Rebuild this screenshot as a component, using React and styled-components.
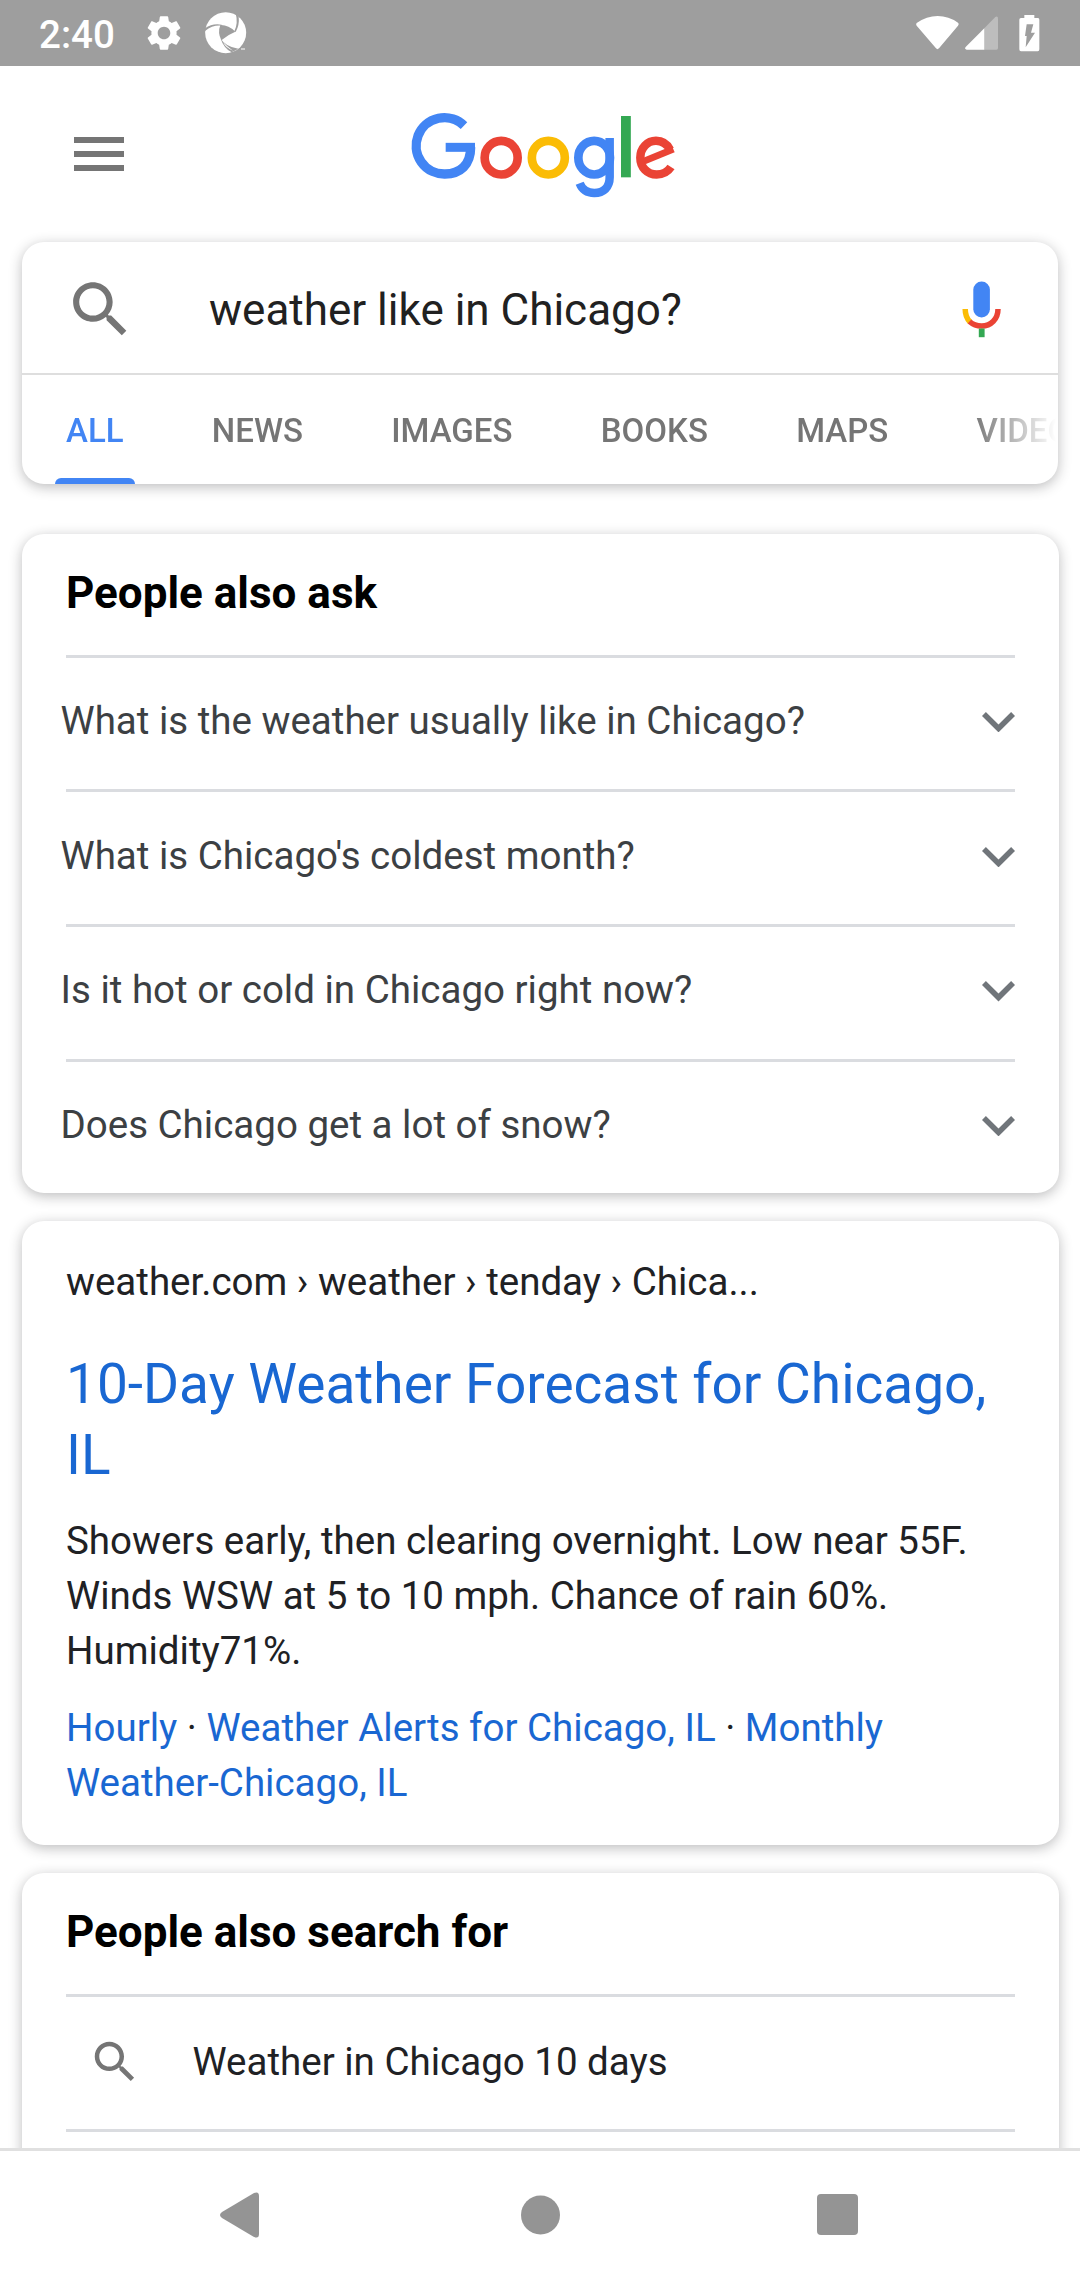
import React from 'react';
import styled, { createGlobalStyle } from 'styled-components';

const Global = createGlobalStyle`
  * { box-sizing: border-box; }
  body { margin: 0; background: #fff; font-family: Roboto, "Liberation Sans", sans-serif; }
  svg { display: block; flex: none; }
`;

const Screen = styled.div`
  width: 1080px;
  height: 2280px;
  display: flex;
  flex-direction: column;
  overflow: hidden;
  background: #fff;
`;

const StatusBar = styled.div`
  height: 66px;
  flex: none;
  background: #9e9e9e;
  display: flex;
  align-items: center;
  justify-content: space-between;
  padding: 0 40px 0 39px;
`;

const StatusGroup = styled.div`
  display: flex;
  align-items: center;
  gap: ${(p) => p.$gap}px;
`;

const Clock = styled.span`
  color: #fff;
  font-size: 38.5px;
  font-weight: 500;
  line-height: 62px;
  width: 84px;
  padding-top: 4px;
`;

const BatterySlot = styled.span`
  padding-left: 15px;
`;

const Content = styled.main`
  flex: 1;
  min-height: 0;
  overflow: hidden;
`;

const Header = styled.header`
  height: 176px;
  display: grid;
  grid-template-columns: 380px 320px 380px;
  padding-top: 24px;
`;

const MenuButton = styled.button`
  border: 0;
  background: none;
  display: flex;
  flex-direction: column;
  gap: 8px;
  padding: 47px 0 0 74px;
`;

const MenuBar = styled.span`
  width: 50px;
  height: 6px;
  background: #757575;
`;

const Card = styled.section`
  margin: 0 21px ${(p) => p.$after}px 22px;
  height: ${(p) => p.$height}px;
  border-radius: 22px;
  background: #fff;
  box-shadow: 0 3px 13px rgba(32, 33, 36, 0.3);
  padding: 0 44px;
`;

const SearchCard = styled(Card)`
  padding: 0;
  margin-right: 22px;
  overflow: hidden;
`;

const SearchRow = styled.div`
  height: 133px;
  border-bottom: 2px solid #dedede;
  display: flex;
  align-items: center;
  padding: 3px 57.5px 0 41.5px;
`;

const Query = styled.span`
  flex: 1;
  padding: 1px 0 0 72.5px;
  font-size: 44px;
  line-height: 56px;
  color: #212121;
`;

const Tabs = styled.nav`
  display: flex;
  height: 109px;
  padding-left: 33px;
  gap: 66.3px;
  mask-image: linear-gradient(to right, #000 950px, transparent 1034px);
`;

const Tab = styled.a`
  flex: none;
  display: flex;
  flex-direction: column;
  justify-content: space-between;
  align-items: center;
  padding: 37px 11px 0;
  font-size: 33px;
  font-weight: 500;
  line-height: 38px;
  color: ${(p) => (p.$active ? '#4285f4' : '#757575')};
`;

const Indicator = styled.span`
  width: 80px;
  margin: 0 -12px;
  height: 6px;
  border-radius: 6px 6px 0 0;
  background: #4285f4;
`;

const Heading = styled.h2`
  margin: 0;
  height: 121px;
  padding-top: 32px;
  font-size: 44px;
  font-weight: 700;
  line-height: 54px;
  color: #000;
`;

const Question = styled.div`
  height: 134.8px;
  border-top: 3px solid #dadce0;
  padding-bottom: 3px;
  display: flex;
  align-items: center;
  justify-content: space-between;
`;

const QuestionText = styled.span`
  margin: 0 0 2px -5.5px;
  font-size: 38.5px;
  line-height: 52px;
  color: #3c4043;
`;

const Suggestion = styled(Question)`
  justify-content: flex-start;
  padding: 0 0 2px 22px;
  gap: 50.5px;
`;

const SuggestionText = styled(QuestionText)`
  margin: 0;
  color: #202124;
`;

const Url = styled.div`
  padding-top: 35px;
  font-size: 38.5px;
  line-height: 52px;
  color: #202124;
`;

const Title = styled.h3`
  margin: 41px 0 0;
  font-size: 55px;
  font-weight: 400;
  line-height: 71px;
  color: #1967d2;
`;

const Snippet = styled.p`
  margin: 22px 0 0;
  font-size: 38.5px;
  line-height: 55px;
  color: #202124;
`;

const Link = styled.a`
  color: #1967d2;
`;

const NavBar = styled.footer`
  height: 132px;
  flex: none;
  border-top: 3px solid #e0e0e0;
  background: #fff;
  display: flex;
  align-items: center;
  justify-content: space-between;
  padding: 0 222px 2px 219px;
`;

function Gear() {
  return (
    <svg width="42" height="42" viewBox="0 0 24 24" fill="#fff">
      <path d="M19.14 12.94c.04-.3.06-.61.06-.94 0-.32-.02-.64-.07-.94l2.03-1.58c.18-.14.23-.41.12-.61l-1.92-3.32c-.12-.22-.37-.29-.59-.22l-2.39.96c-.5-.38-1.03-.7-1.62-.94l-.36-2.54c-.04-.24-.24-.41-.48-.41h-3.84c-.24 0-.43.17-.47.41l-.36 2.54c-.59.24-1.13.57-1.62.94l-2.39-.96c-.22-.08-.47 0-.59.22L2.74 8.87c-.12.21-.08.47.12.61l2.03 1.58c-.05.3-.09.63-.09.94s.02.64.07.94l-2.03 1.58c-.18.14-.23.41-.12.61l1.92 3.32c.12.22.37.29.59.22l2.39-.96c.5.38 1.03.7 1.62.94l.36 2.54c.05.24.24.41.48.41h3.84c.24 0 .44-.17.47-.41l.36-2.54c.59-.24 1.13-.56 1.62-.94l2.39.96c.22.08.47 0 .59-.22l1.92-3.32c.12-.22.07-.47-.12-.61l-2.01-1.58zM12 15.6c-1.98 0-3.6-1.62-3.6-3.6s1.62-3.6 3.6-3.6 3.6 1.62 3.6 3.6-1.62 3.6-3.6 3.6z" />
    </svg>
  );
}

function Aperture() {
  return (
    <svg width="42" height="42" viewBox="0 0 126 126">
      <circle cx="62" cy="62" r="61.5" fill="#fff" />
      <g fill="#9e9e9e">
        <path d="M46 39 Q70 38 91 59 Q70 67 49 85 Q37 62 46 39Z" />
        <path d="M0 49 Q22 33 50 38 V41 Q24 38 0 57Z" />
        <path d="M92 4 L101 14 Q104 38 92 60 L88 58 Q100 34 92 4Z" />
        <path d="M47 80 Q62 104 100 110 L92 115 L80 121 Q56 108 47 80Z" />
      </g>
      <path d="M54 90 Q62 108 84 116 Q66 104 54 90Z" fill="#fff" />
      <path d="M108 111 H120" stroke="#fff" strokeWidth="3" />
    </svg>
  );
}

function Wifi() {
  return (
    <svg width="43" height="34" viewBox="0 0 129 102" fill="#fff">
      <path d="M2 21 Q32 0 65 0 Q98 0 126 20 Q130 24 126 29 L69 97 Q64 102 60 97 L2 29 Q-1 25 2 21Z" />
    </svg>
  );
}

function Signal() {
  return (
    <svg width="33" height="34" viewBox="0 0 99 102">
      <path d="M58 37 L91 3 Q99 -1 99 8 V96 Q99 101 94 101 H58Z" fill="#bdbdbd" />
      <path d="M58 37 V101 H5 Q-3 99 2 93Z" fill="#fff" />
    </svg>
  );
}

function Battery() {
  return (
    <svg width="21" height="37" viewBox="0 0 63 111">
      <path d="M16 0 H46 V9 H57 Q61 9 61 14 V103 Q61 109 56 109 H6 Q1 109 1 103 V14 Q1 9 6 9 H16Z" fill="#fff" />
      <path d="M23 28 H43 L36 53 H48 L20 97 L23 63 H18Z" fill="#9e9e9e" />
    </svg>
  );
}

function Logo() {
  return (
    <svg width="320" height="130" viewBox="0 0 960 390" role="img" aria-label="Google">
      <g fill="none" stroke="#4285f4" strokeWidth="28">
        <path d="M252 107 A84.5 84.5 0 1 0 195 252 C241 252 272 224 272 172" />
        <path d="M197 172 H285" strokeWidth="27" />
        <path d="M689 144 V262 C689 292 670 309 643 309 C622 309 606 298 599 280" strokeWidth="25.5" />
        <ellipse cx="642.5" cy="203" rx="47.5" ry="50.5" strokeWidth="26" />
      </g>
      <ellipse cx="363.5" cy="203" rx="49.5" ry="50.5" fill="none" stroke="#ea4335" strokeWidth="26" />
      <ellipse cx="505" cy="203" rx="49.5" ry="50.5" fill="none" stroke="#fbbc05" strokeWidth="26" />
      <rect x="723" y="78" width="29.5" height="184" fill="#34a853" />
      <path d="M870 179 C861 162 848 152.5 828 152.5 C802 152.5 781 174 781 203 C781 232 802 253.5 830 253.5 C849 253.5 863 246 873 231" fill="none" stroke="#ea4335" strokeWidth="25.5" />
      <path d="M790 203 L876 168 L884 187 L796 223Z" fill="#ea4335" />
    </svg>
  );
}

function SearchIcon({ size, color = '#757575' }) {
  return (
    <svg width={size} height={size} viewBox="0 0 24 24" fill={color}>
      <path d="M15.5 14h-.79l-.28-.27C15.41 12.59 16 11.11 16 9.5 16 5.91 13.09 3 9.5 3S3 5.91 3 9.5 5.91 16 9.5 16c1.61 0 3.09-.59 4.23-1.57l.27.28v.79l5 4.99L20.49 19l-4.99-5zm-6 0C7.01 14 5 11.99 5 9.5S7.01 5 9.5 5 14 7.01 14 9.5 11.99 14 9.5 14z" />
    </svg>
  );
}

function Mic() {
  return (
    <svg width="39" height="57" viewBox="0 0 39 57">
      <rect x="11.3" y="0.5" width="16.6" height="36" rx="8.3" fill="#4285f4" />
      <path d="M3.2 28 Q3.2 36 8 41" fill="none" stroke="#fbbc05" strokeWidth="5.5" />
      <path d="M7.5 40.5 Q12.5 45 19.6 45 C29 45 36 38 36 28" fill="none" stroke="#ea4335" strokeWidth="5.5" />
      <rect x="16.8" y="47.5" width="5.8" height="8.7" fill="#34a853" />
    </svg>
  );
}

function Chevron() {
  return (
    <svg width="33" height="20.4" viewBox="6 8.59 12 7.41" fill="#70757a">
      <path d="M16.59 8.59L12 13.17 7.41 8.59 6 10l6 6 6-6z" />
    </svg>
  );
}

const tabs = ['ALL', 'NEWS', 'IMAGES', 'BOOKS', 'MAPS', 'VIDEOS'];
const questions = [
  'What is the weather usually like in Chicago?',
  "What is Chicago's coldest month?",
  'Is it hot or cold in Chicago right now?',
  'Does Chicago get a lot of snow?',
];

export default function App() {
  return (
    <Screen>
      <Global />
      <StatusBar>
        <StatusGroup $gap={20}>
          <Clock>2:40</Clock>
          <Gear />
          <Aperture />
        </StatusGroup>
        <StatusGroup $gap={6}>
          <Wifi />
          <Signal />
          <BatterySlot>
            <Battery />
          </BatterySlot>
        </StatusGroup>
      </StatusBar>
      <Content>
        <Header>
          <MenuButton aria-label="Menu">
            <MenuBar />
            <MenuBar />
            <MenuBar />
          </MenuButton>
          <Logo />
        </Header>
        <SearchCard $height={242} $after={49.5}>
          <SearchRow>
            <SearchIcon size={73} />
            <Query>weather like in Chicago?</Query>
            <Mic />
          </SearchRow>
          <Tabs>
            {tabs.map((t, i) => (
              <Tab key={t} $active={i === 0}>
                {t}
                {i === 0 && <Indicator />}
              </Tab>
            ))}
          </Tabs>
        </SearchCard>
        <Card $height={659.5} $after={28}>
          <Heading>People also ask</Heading>
          {questions.map((q) => (
            <Question key={q}>
              <QuestionText>{q}</QuestionText>
              <Chevron />
            </Question>
          ))}
        </Card>
        <Card $height={624} $after={28}>
          <Url>weather.com › weather › tenday › Chica...</Url>
          <Title>10-Day Weather Forecast for Chicago, IL</Title>
          <Snippet>
            Showers early, then clearing overnight. Low near 55F. Winds WSW at 5 to 10 mph. Chance of rain 60%. Humidity71%.
          </Snippet>
          <Snippet>
            <Link>Hourly</Link> · <Link>Weather Alerts for Chicago, IL</Link> · <Link>Monthly Weather-Chicago, IL</Link>
          </Snippet>
        </Card>
        <Card $height={420} $after={0}>
          <Heading>People also search for</Heading>
          <Suggestion>
            <SearchIcon size={54} />
            <SuggestionText>Weather in Chicago 10 days</SuggestionText>
          </Suggestion>
          <Suggestion />
        </Card>
      </Content>
      <NavBar>
        <svg width="46" height="48" viewBox="0 0 46 48" fill="#949494">
          <path d="M3 21 L35 2 Q40 0 40 5 V43 Q40 48 35 46 L3 27 Q-1 24 3 21Z" />
        </svg>
        <svg width="40" height="40" viewBox="0 0 40 40" fill="#949494">
          <circle cx="19.5" cy="20" r="19.5" />
        </svg>
        <svg width="41" height="41" viewBox="0 0 41 41" fill="#949494">
          <rect width="41" height="41" rx="4" />
        </svg>
      </NavBar>
    </Screen>
  );
}
